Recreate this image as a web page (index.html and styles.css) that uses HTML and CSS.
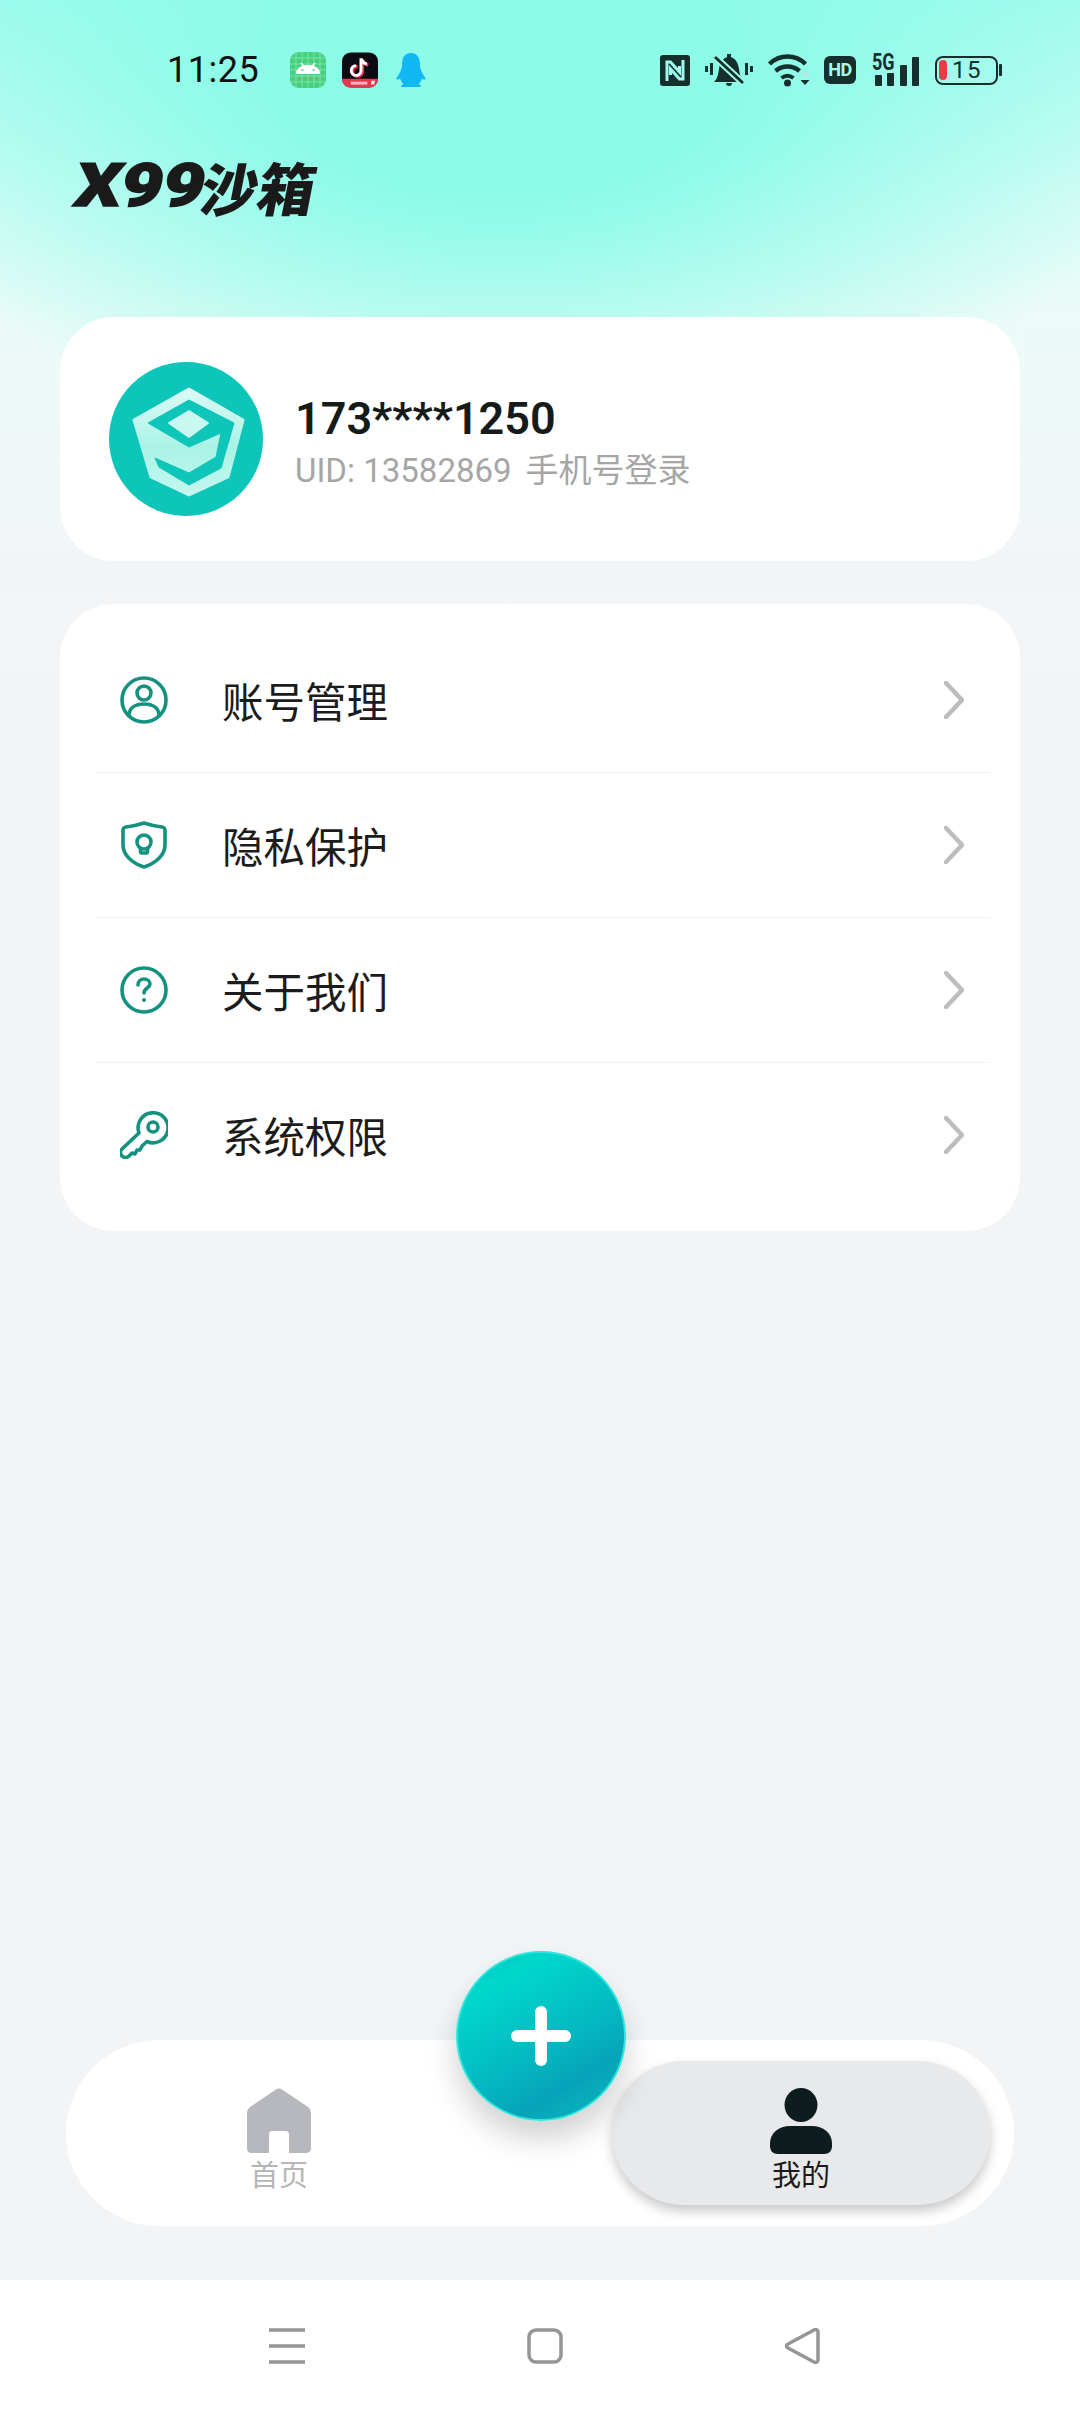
FILE: index.html
```html
<!DOCTYPE html>
<html lang="zh-CN">
<head>
    <meta charset="UTF-8">
    <meta name="viewport" content="width=device-width, initial-scale=1.0">
    <title>X99沙箱</title>
    <link rel="stylesheet" href="styles.css">
</head>
<body>
    <div class="page">
        <!-- 状态栏 -->
        <div class="status-bar">
            <span class="time">11:25</span>
            <div class="notify-icons">
                <svg class="app-android" viewBox="0 0 36 36">
                    <rect width="36" height="36" rx="9" fill="#45d07e"/>
                    <path d="M6 0V36M12 0V36M18 0V36M24 0V36M30 0V36M0 6H36M0 12H36M0 18H36M0 24H36M0 30H36" stroke="#7fe2a8" stroke-width="1"/>
                    <path d="M6 22c0-6 5-9 12-9s12 3 12 9z" fill="#fff"/>
                    <path d="M11 11l3 3M25 11l-3 3" stroke="#fff" stroke-width="1.2"/>
                    <circle cx="12.500" cy="18" r="1" fill="#45d07e"/>
                    <circle cx="23.500" cy="18" r="1" fill="#45d07e"/>
                </svg>
                <svg class="app-tiktok" viewBox="0 0 37 36">
                    <rect width="37" height="36" rx="9" fill="#0b0b12"/>
                    <path d="M0 27H37C37 32 33 36 28 36H9C4 36 0 32 0 27z" fill="#e8384f"/>
                    <path d="M9 30h17v3H9z" fill="#f6b4bd"/>
                    <path d="M30 29h4l-1 4h-3z" fill="#f7e3e3"/>
                    <path d="M21 7v12.500a5 5 0 1 1-5-5M21 7c1 4 3 5 6 6" fill="none" stroke="#ff2d55" stroke-width="3.400"/>
                    <path d="M19.500 6v12.500a5 5 0 1 1-5-5M19.500 6c1 4 3 5 6 6" fill="none" stroke="#fff" stroke-width="3"/>
                </svg>
                <svg class="app-qq" viewBox="0 0 30 34">
                    <path d="M15 0C8 0 6 6 6 12 6 17 2 23 0 26 2 27 3 26.500 4 25.500 5 28 6 30 7.500 31 5 32 4.500 33.500 6 34H24C25.500 33.500 25 32 22.500 31 24 30 25 28 26 25.500 27 26.500 28 27 30 26 28 23 24 17 24 12 24 6 22 0 15 0z" fill="#12b7f5"/>
                </svg>
            </div>
            <div class="system-icons">
                <svg class="ic-nfc" viewBox="0 0 30 31">
                    <rect width="30" height="31" rx="3" fill="#15302c"/>
                    <path d="M7 26V7h3.500l9 10v-6M23 5v19h-3.500l-9-10v6" fill="none" stroke="#9ffbeb" stroke-width="3"/>
                </svg>
                <svg class="ic-bell" viewBox="0 0 48 34">
                    <path d="M9 29c3-3 4-6 5-13C15 8 19 4 24 4s9 4 10 12c1 7 2 10 5 13z" fill="#15302c"/>
                    <path d="M21 30h6a3 3 0 0 1-6 0zM22 1h4v4h-4z" fill="#15302c"/>
                    <path d="M10 4l28 26" stroke="#a0fbeb" stroke-width="7"/>
                    <path d="M10 4l28 26" stroke="#15302c" stroke-width="3"/>
                    <path d="M1.500 13v6M6.500 10v12M41.500 10v12M46.500 13v6" stroke="#15302c" stroke-width="3"/>
                </svg>
                <svg class="ic-wifi" viewBox="0 0 42 34">
                    <path d="M2 11C12 1 28 1 38 11" fill="none" stroke="#15302c" stroke-width="4.500"/>
                    <path d="M8 18c7-6 17-6 24 0" fill="none" stroke="#15302c" stroke-width="4.500"/>
                    <path d="M14 25c4-3 8-3 12 0" fill="none" stroke="#15302c" stroke-width="4"/>
                    <circle cx="20" cy="30" r="3.500" fill="#15302c"/>
                    <path d="M33 23l5-6 5 6z" fill="#b5e6dc"/>
                    <path d="M33 27h9l-4.500 5z" fill="#15302c"/>
                </svg>
                <span class="ic-hd">HD</span>
                <div class="signal">
                    <span class="signal-5g">5G</span>
                    <div class="bars">
                        <i class="bar b1"></i><i class="bar b2"></i><i class="bar b3"></i><i class="bar b4"></i>
                    </div>
                </div>
                <div class="battery">
                    <div class="battery-body">
                        <i class="battery-level"></i>
                        <span class="battery-num">15</span>
                    </div>
                    <i class="battery-tip"></i>
                </div>
            </div>
        </div>

        <h1 class="app-title"><span class="title-latin">X99</span><span class="title-cn">沙箱</span></h1>

        <!-- 用户卡片 -->
        <div class="card user-card">
            <svg class="avatar" viewBox="0 0 154 154">
                <defs>
                    <linearGradient id="boxFill" x1="0" y1="0" x2="0" y2="1">
                        <stop offset="0" stop-color="#dcfaf6"/>
                        <stop offset="0.55" stop-color="#aaf3e6"/>
                        <stop offset="1" stop-color="#c4f7ef"/>
                    </linearGradient>
                </defs>
                <circle cx="77" cy="77" r="77" fill="#0ec5ba"/>
                <path d="M80 27L134 58 119 115 80 133 42 115 25 58z" fill="url(#boxFill)" stroke="url(#boxFill)" stroke-width="3" stroke-linejoin="round"/>
                <path d="M80 38L125 61 112 106 80 123 50 105 46 96 80 111 107 95 112 71 80 85 39 61z" fill="#0ec5ba" stroke="#0ec5ba" stroke-width="1" stroke-linejoin="round"/>
                <path d="M80 49L99 61 80 75 60 61z" fill="#c9f8f0" stroke="#c9f8f0" stroke-width="2" stroke-linejoin="round"/>
            </svg>
            <div class="user-info">
                <div class="user-name">173****1250</div>
                <div class="user-sub">UID: 13582869<span class="login-way">手机号登录</span></div>
            </div>
        </div>

        <!-- 菜单 -->
        <div class="card menu-card">
            <div class="menu-row">
                <svg class="menu-icon" viewBox="0 0 48 48">
                    <circle cx="24" cy="24" r="22"/>
                    <circle cx="24" cy="17" r="7"/>
                    <path d="M9 40c0-8 6-12 15-12s15 4 15 12"/>
                </svg>
                <span class="menu-text">账号管理</span>
                <svg class="chevron" viewBox="0 0 20 38"><path d="M2 2L18 19 2 36"/></svg>
            </div>
            <div class="menu-row">
                <svg class="menu-icon" viewBox="0 0 48 48">
                    <path d="M24 2C30 4 37 5.500 42 6 44 6 45 8 45 9V24C45 34 36 42 24 46 12 42 3 34 3 24V9C3 8 4 6 6 6 11 5.500 18 4 24 2z"/>
                    <circle cx="24" cy="21" r="7"/>
                    <path d="M20.500 27V30.500C20.500 31.500 21 32 22 32H26C27 32 27.500 31.500 27.500 30.500V27"/>
                </svg>
                <span class="menu-text">隐私保护</span>
                <svg class="chevron" viewBox="0 0 20 38"><path d="M2 2L18 19 2 36"/></svg>
            </div>
            <div class="menu-row">
                <svg class="menu-icon" viewBox="0 0 48 48">
                    <circle cx="24" cy="24" r="22"/>
                    <path d="M18 19c0-4 3-6 6-6s6 2 6 5c0 4-6 4-6 9"/>
                    <circle class="dot" cx="24" cy="34" r="2"/>
                </svg>
                <span class="menu-text">关于我们</span>
                <svg class="chevron" viewBox="0 0 20 38"><path d="M2 2L18 19 2 36"/></svg>
            </div>
            <div class="menu-row">
                <svg class="menu-icon" viewBox="0 0 48 48">
                    <path d="M27 30.500A15 15 0 1 0 19 22L2 38C0 40 0 43 2 45 4 47 7 47 9 45L12 42 15 43 17 39 20 39 22 35z"/>
                    <circle cx="33" cy="16" r="5"/>
                </svg>
                <span class="menu-text">系统权限</span>
                <svg class="chevron" viewBox="0 0 20 38"><path d="M2 2L18 19 2 36"/></svg>
            </div>
        </div>

        <!-- 底部导航 -->
        <div class="tab-wrap">
            <div class="tab-bar">
                <div class="tab tab-home">
                    <svg class="tab-icon" viewBox="0 0 64 66">
                        <path d="M29 1.500C30.500 0 33.500 0 35 1.500L61 19C63 21 64 23 64 25V60C64 63 62 65 59 65H42V46C42 44.500 41 43 39 43H25C23 43 22 44.500 22 46V65H5C2 65 0 63 0 60V25C0 23 1 21 3 19z" fill="#b6b8bd"/>
                    </svg>
                    <span class="tab-label">首页</span>
                </div>
                <div class="tab tab-mine">
                    <svg class="tab-icon" viewBox="0 0 62 66">
                        <ellipse cx="31" cy="17" rx="16.500" ry="17" fill="#0d1c1c"/>
                        <path d="M20 38H42C53 38 62 45 62 55V58C62 63 59 66 54 66H8C3 66 0 63 0 58V55C0 45 9 38 20 38z" fill="#0d1c1c"/>
                    </svg>
                    <span class="tab-label">我的</span>
                </div>
            </div>
            <div class="fab">
                <i class="plus-h"></i>
                <i class="plus-v"></i>
            </div>
        </div>

        <!-- 系统导航键 -->
        <div class="nav-bar">
            <svg class="nav-key" viewBox="0 0 36 36"><path d="M0 2H36M0 18H36M0 34H36"/></svg>
            <svg class="nav-key" viewBox="0 0 36 36"><rect x="2" y="2" width="32" height="32" rx="7"/></svg>
            <svg class="nav-key" viewBox="0 0 36 36"><path d="M33 4C33 2 31 1 29 2L3 16C1 17 1 19 3 20L29 34C31 35 33 34 33 32z"/></svg>
        </div>
    </div>
</body>
</html>
```

FILE: styles.css
```css
/* 基本样式设置 */
* {
    box-sizing: border-box;
}
html, body {
    margin: 0;
    padding: 0;
}
body {
    font-family: Roboto, "Noto Sans CJK SC", sans-serif;
    color: #161616;
}
.page {
    width: 1080px;
    height: 2412px;
    display: flex;
    flex-direction: column;
    overflow: hidden;
    background:
        radial-gradient(ellipse 680px 400px at 500px 60px, rgba(140, 251, 232, 1) 35%, rgba(140, 251, 232, 0) 100%),
        linear-gradient(180deg, #a5fbee 0, #d8fcf6 200px, #ecfbf8 320px, #f2f5f7 560px, #f3f4f6 700px);
}

/* 状态栏 */
.status-bar {
    height: 140px;
    padding: 0 78px 0 167px;
    display: flex;
    align-items: center;
    flex-shrink: 0;
}
.time {
    font-size: 36px;
    width: 123px;
    color: #111;
    letter-spacing: 0.5px;
}
.notify-icons {
    display: flex;
    align-items: center;
    gap: 16px;
}
.app-android, .app-tiktok {
    width: 36px;
    height: 36px;
}
.app-qq {
    width: 30px;
    height: 34px;
    margin-left: 2px;
}
.system-icons {
    margin-left: auto;
    display: flex;
    align-items: center;
}
.ic-nfc {
    width: 30px;
    height: 31px;
    margin-right: 15px;
}
.ic-bell {
    width: 48px;
    height: 34px;
    margin-right: 14px;
}
.ic-wifi {
    width: 43px;
    height: 34px;
    margin-right: 14px;
}
.ic-hd {
    width: 32px;
    height: 28px;
    margin-right: 16px;
    background: #15302c;
    border-radius: 6px;
    color: #a8fbec;
    font-size: 18px;
    font-weight: 700;
    line-height: 28px;
    text-align: center;
    letter-spacing: -0.5px;
}
.signal {
    width: 47px;
    height: 32px;
    position: relative;
    margin-right: 16px;
}
.signal-5g {
    position: absolute;
    left: 0;
    top: -4px;
    font-size: 24px;
    font-weight: 700;
    line-height: 24px;
    color: #15302c;
    transform: scaleX(0.75);
    transform-origin: left center;
}
.bars {
    position: absolute;
    inset: 0;
    padding-left: 3px;
    display: flex;
    align-items: flex-end;
    gap: 5.3px;
}
.bar {
    width: 7px;
    background: #15302c;
    border-radius: 1px;
}
.b1 { height: 11px; }
.b2 { height: 13px; }
.b3 { height: 21px; }
.b4 { height: 29px; }
.battery {
    display: flex;
    align-items: center;
    gap: 1px;
}
.battery-body {
    width: 63px;
    height: 29px;
    border: 2.5px solid #15302c;
    border-radius: 8px;
    display: flex;
    align-items: center;
    padding-left: 2px;
}
.battery-level {
    width: 8px;
    height: 20px;
    background: #ee3a46;
    border-radius: 4px;
}
.battery-num {
    font-size: 24px;
    margin-left: 5px;
    color: #15302c;
    letter-spacing: 1.5px;
}
.battery-tip {
    width: 3px;
    height: 12px;
    background: #15302c;
    border-radius: 1px;
}

/* 标题 */
.app-title {
    margin: 0 0 0 76px;
    height: 177px;
    display: flex;
    align-items: flex-start;
    flex-shrink: 0;
    color: #1a1a1a;
}
.title-latin {
    width: 120px;
    font-family: Roboto, sans-serif;
    font-size: 60px;
    font-weight: 900;
    line-height: 46px;
    margin-top: 23px;
    display: inline-block;
    transform: skewX(-11deg) scaleX(1.2);
    transform-origin: left center;
    -webkit-text-stroke: 1.5px #1a1a1a;
}
.title-cn {
    font-family: "Noto Sans CJK SC", sans-serif;
    font-size: 57px;
    font-weight: 900;
    line-height: 46px;
    margin-top: 23px;
    margin-left: 6px;
    display: inline-block;
    transform: skewX(-11deg);
}

/* 卡片 */
.card {
    margin: 0 60px;
    background: #fff;
    border-radius: 54px;
    flex-shrink: 0;
}
.user-card {
    height: 244px;
    padding-left: 49px;
    display: flex;
    align-items: center;
    gap: 32px;
}
.avatar {
    width: 154px;
    height: 154px;
    flex-shrink: 0;
}
.user-info {
    padding-top: 8px;
}
.user-name {
    font-size: 45px;
    font-weight: 600;
    line-height: 54px;
    color: #151a1a;
}
.user-sub {
    margin-top: 2px;
    font-size: 33px;
    line-height: 46px;
    color: #a6a6a6;
}
.login-way {
    margin-left: 14px;
}
.menu-card {
    margin-top: 43px;
    padding: 23px 0 24px;
}
.menu-row {
    height: 145px;
    margin: 0 30px 0 36px;
    padding: 0 26px 0 24px;
    display: flex;
    align-items: center;
    border-top: 1px solid #f1f1f1;
}
.menu-row:first-child {
    border-top: none;
}
.menu-icon {
    width: 48px;
    height: 48px;
    fill: none;
    stroke: #15917f;
    stroke-width: 3.6;
    stroke-linejoin: round;
    stroke-linecap: round;
}
.menu-icon .dot {
    fill: #15917f;
    stroke: none;
}
.menu-text {
    margin-left: 54px;
    font-size: 41.5px;
    font-family: "Noto Sans CJK SC", sans-serif;
    font-weight: 400;
    color: #1c1c1c;
}
.chevron {
    margin-left: auto;
    width: 20px;
    height: 38px;
    fill: none;
    stroke: #bdbdbd;
    stroke-width: 4.5;
    stroke-linecap: round;
    stroke-linejoin: round;
}

/* 底部导航 */
.tab-wrap {
    margin-top: auto;
    position: relative;
    padding: 0 66px 54px;
    flex-shrink: 0;
}
.tab-bar {
    height: 186px;
    background: #fff;
    border-radius: 93px;
    display: flex;
    align-items: center;
    padding-right: 24px;
}
.tab {
    padding-top: 14px;
    display: flex;
    flex-direction: column;
    align-items: center;
    justify-content: center;
}
.tab-home {
    width: 426px;
    margin-right: 120px;
}
.tab-mine {
    flex: 1;
    height: 144px;
    background: #e8e9eb;
    border-radius: 72px;
    box-shadow: 0 6px 12px rgba(0, 0, 0, 0.22);
}
.tab-icon {
    width: 64px;
    height: 66px;
}
.tab-label {
    font-family: "Noto Sans CJK SC", sans-serif;
    font-size: 29px;
    line-height: 38px;
    color: #b6b6b6;
}
.tab-mine .tab-label {
    color: #1a1a1a;
}
.fab {
    position: absolute;
    left: 456px;
    top: -89px;
    width: 170px;
    height: 170px;
    border-radius: 50%;
    background: linear-gradient(150deg, #03bfbc 0, #00d8cc 20%, #04b4bf 60%, #06a3b8 75%, #0bbcc0 100%);
    box-shadow: 0 18px 30px rgba(0, 0, 0, 0.18);
    border: 2px solid #2fe6de;
}
.plus-h, .plus-v {
    position: absolute;
    background: #fff;
    border-radius: 6px;
}
.plus-h {
    left: 53px;
    top: 77px;
    width: 60px;
    height: 12px;
}
.plus-v {
    left: 77px;
    top: 53px;
    width: 12px;
    height: 60px;
}

/* 系统导航键 */
.nav-bar {
    height: 132px;
    background: #fff;
    padding: 48px 259px 0 269px;
    display: flex;
    justify-content: space-between;
    align-items: flex-start;
    flex-shrink: 0;
}
.nav-key {
    width: 36px;
    height: 36px;
    fill: none;
    stroke: #959595;
    stroke-width: 3.5;
    stroke-linejoin: round;
}
```
